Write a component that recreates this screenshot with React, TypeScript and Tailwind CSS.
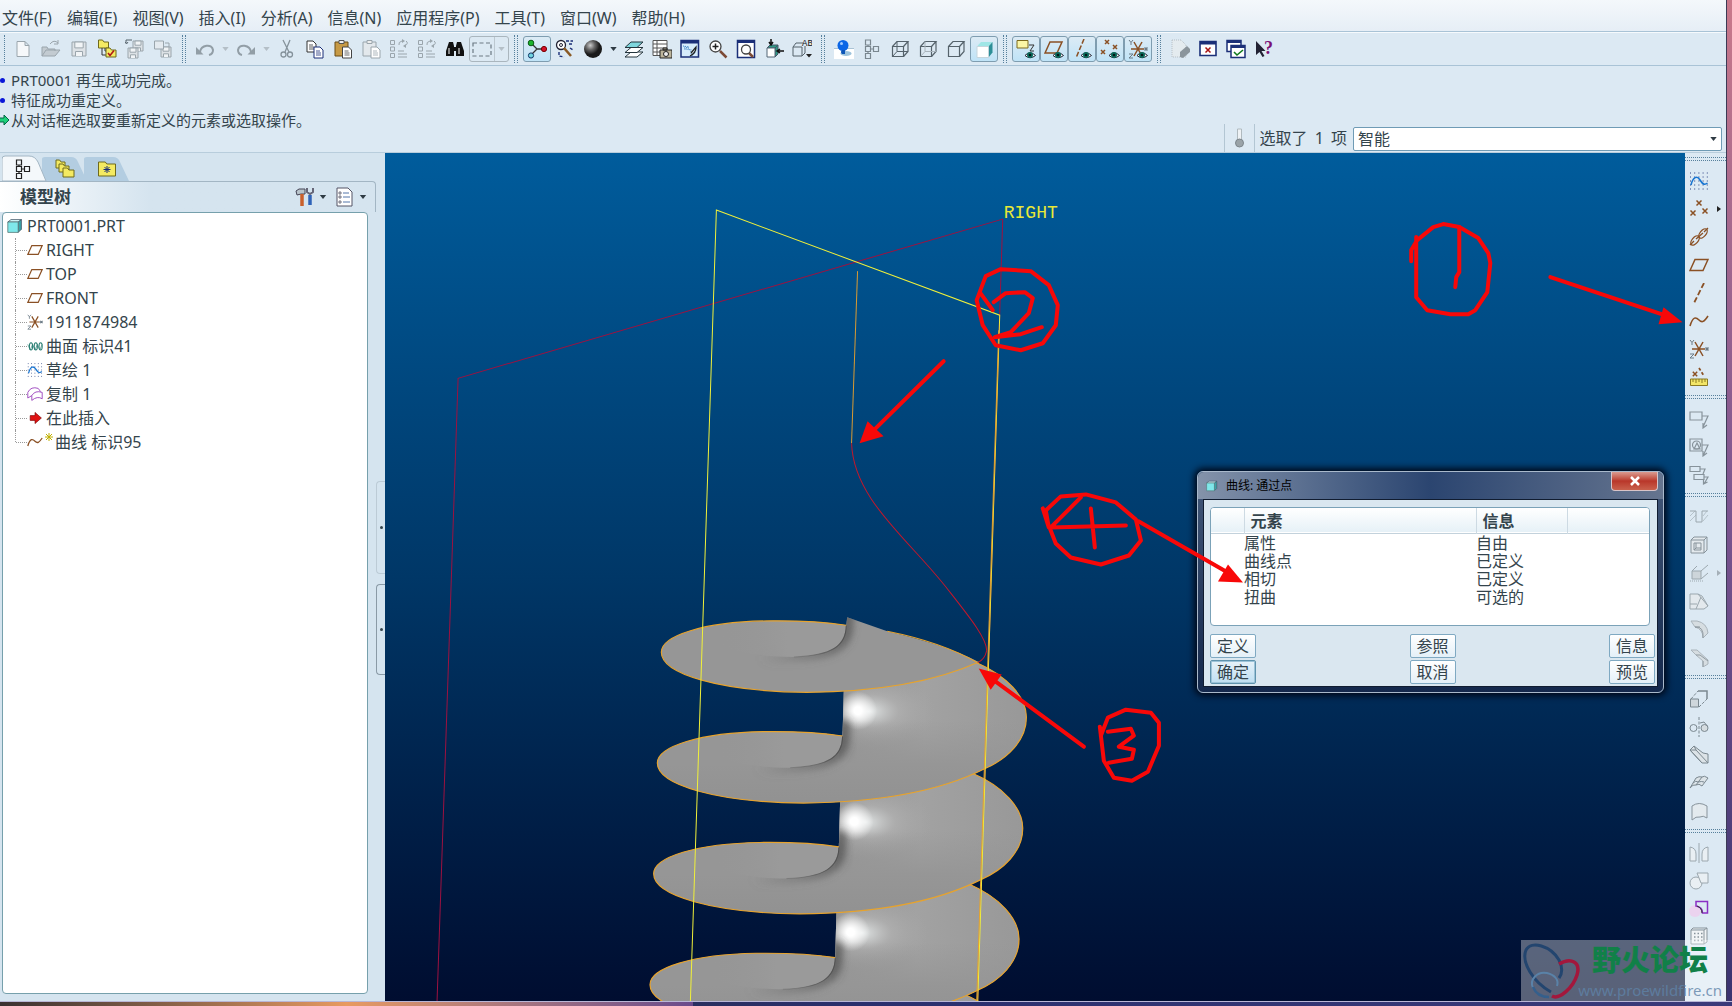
import { useState, type ReactNode } from 'react'
import clsx from 'clsx'

const G = '#9aa5ac'
const D = '#55626b'
const B = '#8a5024'
const N = '#1b2f78'

const eye = (
  <g>
    <path d="M9 16.500Q14 11 19.500 16.500Q14 21 9 16.500Z" fill="#fff" stroke="#223" strokeWidth="1" />
    <circle cx="14" cy="16" r="3" fill="#0b6b5c" />
    <circle cx="14" cy="16" r="1.300" fill="#001a1a" />
  </g>
)

const folder = (x: number, y: number, w: number, h: number) => (
  <path d={`M${x} ${y}h${w * 0.4}l1.500 2h${w * 0.6 - 1.5}v${h - 2}h-${w}Z`} fill="#f4ea62" stroke="#6f6a1c" />
)

const cross = (x: number, y: number, c = B, r = 2) => (
  <path d={`M${x - r} ${y - r}l${r * 2} ${r * 2}M${x + r} ${y - r}l-${r * 2} ${r * 2}`} stroke={c} strokeWidth="1.500" />
)

const cube = (fill: string, inner = false) => (
  <g stroke={D} strokeWidth="1.200">
    <path d="M2.500 7.500h11v10h-11Z" fill={fill} />
    <path d="M2.500 7.500L7 2.500h11L13.500 7.500M18 2.500v10l-4.500 5" />
    {inner && <path d="M7 2.500v10h11M7 12.500l-4.500 5" strokeWidth="1" />}
  </g>
)

const floppy = (x: number, y: number, s: number) => (
  <g stroke={G} fill="#dde2e6">
    <path d={`M${x} ${y}h${s}v${s}h-${s}Z`} />
    <path d={`M${x + s * 0.2} ${y}h${s * 0.6}v${s * 0.42}h-${s * 0.6}ZM${x + s * 0.25} ${y + s}v-${s * 0.32}h${s * 0.5}v${s * 0.32}`} fill="#f1f4f6" />
  </g>
)

const sheet = (x: number, y: number, c: string) => (
  <g>
    <path d={`M${x} ${y}h6l3 3v8h-9Z`} fill="#fff" stroke={c} />
    <path d={`M${x + 2} ${y + 4}h4M${x + 2} ${y + 6}h5M${x + 2} ${y + 8}h5`} stroke={c} strokeWidth="0.800" />
  </g>
)

const listArrows = (
  <g stroke={G}>
    <path d="M1.500 1.500h4v4h-4ZM1.500 8h4v4h-4ZM1.500 14.500h4v4h-4Z" />
    <path d="M9 12h6M9 15h9M9 18h9M10 6Q9 3 13 2M17 2Q20 4 16 7" />
    <path d="M13 0v4l3-2ZM17 5v4l-3-2Z" fill={G} stroke="none" />
  </g>
)

const csys = (
  <g>
    <path d="M3 10h13M6 3l8 14M14 3L6 17" stroke={B} strokeWidth="1.500" />
    <path d="M1 1l2 2.500L5 1M3 3.500V6M1 15h4l-4 4h4" stroke="#6b7a85" />
    {cross(18, 10, '#6b7a85', 1.5)}
  </g>
)

const sketch = (
  <g>
    <path d="M1 2h18M1 6h18M1 14h18M1 18h18M1 10h18" stroke="#2a3f80" strokeDasharray="1 3.200" />
    <path d="M2 14C4 6 8 4 11 9S16 14 18.500 12" stroke="#1976d2" strokeWidth="1.600" />
  </g>
)

const plane = <path d="M6 4.500h13l-5 11h-13Z" stroke={B} strokeWidth="1.500" />

const wire = <path d="M1 15C4 5 7 6 10 9S15 11 19 5" stroke={B} strokeWidth="1.600" />

const frames = (c: string) => (
  <path d="M7.500 1h5v5h-5ZM7.500 7.500h5v5h-5ZM7.500 14.500h5v5h-5ZM15.500 7.500h5v5h-5ZM10 6v1.500M10 12.500v2M12.500 10h3" stroke={c} strokeWidth="1.200" transform="translate(-4 0)" />
)

const icons: Record<string, ReactNode> = {
  new: <path d="M4 2.500h8l4 4v11H4ZM12 2.500v4h4" fill="#f6f8fa" stroke={G} />,
  open: <g stroke={G}><path d="M1 17V8h5l1 2h7v2M1 17l4-6h14l-5 6Z" fill="#c3cbd1" /><path d="M9 5q4-5 8-1M17 1v4h-4" /></g>,
  save: floppy(3, 3, 14),
  folders: <g>{folder(1.5, 1, 10, 8)}<path d="M5 9v7h4M8 9v3h3" stroke="#333" />{folder(9, 9, 10, 9)}<path d="M11 14l2 2.500 4-5" stroke="#b01818" strokeWidth="1.600" /></g>,
  saveAs: <g>{floppy(8, 2, 10)}{floppy(3, 9, 10)}<path d="M7 1H1v3M0 3l1.500 2L3 3" stroke={D} /></g>,
  saveCopy: <g>{floppy(8, 8, 10)}<path d="M1.500 2h9v8h-9Z" fill="#e4eaef" stroke={G} /><path d="M12 4h4v4" stroke={G} /></g>,
  undo: <g><path d="M5 13C6 6 17 4 18 11q0 4-4 5" stroke="#929ea6" strokeWidth="2" /><path d="M1 8v7.500h7.500Z" fill="#929ea6" /></g>,
  redo: <g><path d="M15 13C14 6 3 4 2 11q0 4 4 5" stroke="#929ea6" strokeWidth="2" /><path d="M19 8v7.500h-7.500Z" fill="#929ea6" /></g>,
  cut: <g stroke="#85929b" strokeWidth="1.300"><path d="M6 1l6 12M13 1L8 13" /><circle cx="6.500" cy="15.500" r="2.500" /><circle cx="13" cy="15.500" r="2.500" /></g>,
  copy: <g>{sheet(2, 2, '#333')}{sheet(9, 8, N)}</g>,
  paste: <g><path d="M2 3h13v14H2Z" fill="#c79a45" stroke="#6b4d16" /><path d="M6 1.500h5v3H6Z" fill="#eee" stroke="#555" />{sheet(9.5, 8, '#444')}</g>,
  pasteSpecial: <g><path d="M2 3h13v14H2Z" fill="#e3e8ec" stroke={G} /><path d="M6 1.500h5v3H6Z" fill="#eee" stroke={G} />{sheet(10, 8, G)}</g>,
  regen: listArrows,
  regenMgr: listArrows,
  find: <g fill="#111"><path d="M4 3h4l1 4v10H1v-5ZM16 3h-4l-1 4v10h8v-5Z" /><path d="M8 8h4v4H8Z" /><path d="M4 9v6M14 9v6" stroke="#fff" /></g>,
  box: <path d="M1 4h18v13H1Z" stroke="#6c7a84" strokeDasharray="4 2.500" strokeWidth="1.200" />,
  spin: <g><path d="M4 4l6 6M10 10h7M10 10l-6 6" stroke="#333" strokeWidth="1.300" /><circle cx="4" cy="4" r="2.800" fill="#1bb52c" stroke="#0a5a16" /><circle cx="17" cy="10" r="2.600" fill="#d3122b" stroke="#700" /><circle cx="4" cy="16.500" r="2.600" fill="#6fd4de" stroke="#136" /></g>,
  orient: <g><circle cx="6" cy="6" r="4.500" fill="#fff" stroke="#223" strokeWidth="1.300" /><circle cx="6" cy="6" r="1.500" stroke="#223" /><path d="M9 9l7 8" stroke="#8a5a24" strokeWidth="2.500" /><path d="M11 2h7M14 5h4M4 13v4l5 1M15 9l3 2" stroke={N} strokeDasharray="3 1.500" strokeWidth="1.400" /></g>,
  sphere: <circle cx="10" cy="10" r="9" fill="url(#ball)" />,
  layers: <g stroke="#24343c"><path d="M1 18l6-5h12l-6 5Z" fill="#fff" /><path d="M1 13.500l6-5h12l-6 5Z" fill="#fff" /><path d="M1 8.500L7 3h12l-6 5.500Z" fill="#7fd6dc" /></g>,
  camera: <g><path d="M1 1.500h14v15H1ZM1 5h14M1 9h14M1 13h14M5 1.500v15" fill="#fff" stroke="#555" /><path d="M8 11h12v8H8ZM11 9h4v2h-4Z" fill="#bcb49b" stroke="#222" /><circle cx="14" cy="15" r="2.500" fill="#eee" stroke="#222" /></g>,
  repaint: <g><path d="M1 1.500h17.500v16.500H1Z" fill="#d7ecfb" stroke={N} strokeWidth="1.500" /><path d="M1 1h17.500v3.500H1Z" fill={N} /><path d="M3 7l6 1-5 2 8 1M4 8q8 1 7 9q5-2 5-9" stroke="#3d83c5" strokeDasharray="1 1" /><path d="M10 17q6-3 6-9l-5 6" stroke="#222" strokeWidth="1.300" /></g>,
  zoomIn: <g><path d="M12 12l6.500 6.500" stroke="#7c4a36" strokeWidth="2.500" /><circle cx="7.500" cy="7.500" r="5.500" fill="#fff" stroke="#444" strokeWidth="1.300" /><path d="M4.500 7.500h6M7.500 4.500v6" stroke="#222" strokeWidth="1.500" /></g>,
  refit: <g><path d="M1.500 1.500h17v17h-17Z" fill="#fff" stroke={N} strokeWidth="1.500" /><path d="M1 1h18v3H1Z" fill={N} /><path d="M12 13l5 5" stroke="#7c4a36" strokeWidth="2.500" /><circle cx="10" cy="10.500" r="4.500" fill="#fff" stroke="#444" strokeWidth="1.300" /></g>,
  reorient: <g><path d="M3 9l3-3h8l-3 3ZM11 9l3-3v9l-3 3Z" fill="#2e9c86" stroke="#456" /><path d="M3 9h8v9H3Z" fill="#fff" stroke="#567" /><path d="M7 0v5M5 3l2 3 2-3M20 12h-6M16 10l-3 2 3 2" stroke="#111" strokeWidth="1.500" /></g>,
  views: <g><path d="M1 8h9v9H1ZM1 8l3-4h7M10 17l3-3V7" fill="none" stroke={D} /><text x="10" y="7" fontSize="9" fontFamily="Liberation Mono" fill="#111">AB</text><path d="M14 15h6l-3 3.500Z" fill="#222" /></g>,
  pushpin: <g><path d="M0 10h20v10H0Z" fill="#fff" /><path d="M0 9.500h20" stroke="#aac3d5" /><ellipse cx="12" cy="14.500" rx="5.500" ry="2.500" fill="#9cc3dd" /><circle cx="9" cy="6.500" r="5.500" fill="#0b66e6" /><path d="M8 11q-2 2 0 4h3v-4Z" fill="#0d55b8" /><circle cx="7.500" cy="4.500" r="1.500" fill="#9fcaff" /></g>,
  tree: frames('#7a878f'),
  wireframe: cube('none', true),
  hidden: <g>{cube('none')}<path d="M7 2.500v10h11M7 12.500l-4.500 5" stroke="#a9b4bc" /></g>,
  nohidden: cube('none'),
  shaded: <g><path d="M3 7.500L7 3h11.500l-4 4.500Z" fill="#9fe6e6" /><path d="M14.500 7.500l4-4.500v10.500l-4 5Z" fill="#2d8f97" /><path d="M3 7.500h11.500v11H3Z" fill="#fff" stroke="#c6d6dd" /></g>,
  annot: <g><path d="M1 1.500h11v7.500H1Z" fill="#fbf6a6" stroke="#7c6a1e" /><path d="M13 6h5l-4 6h4" stroke="#333" />{eye}</g>,
  planeEye: <g><path d="M6 3h12l-5 11H1Z" stroke={B} strokeWidth="1.500" />{eye}</g>,
  axisEye: <g><path d="M12 0L4 19" stroke={B} strokeWidth="1.500" strokeDasharray="5 2" />{eye}</g>,
  pointEye: <g>{cross(7, 3)}{cross(15, 8)}{cross(3, 13)}{eye}</g>,
  csysEye: <g>{csys}{eye}</g>,
  annotOff: <g><path d="M2 1h9l5 5v12H2Z" stroke="#b5bec4" strokeDasharray="1 1" fill="#e4ebef" /><path d="M10 13l7-6 3 3v3l-7 6-3-1Z" fill="#8b959c" /></g>,
  closeWin: <g><path d="M2 2.500h16v14H2Z" fill="#fff" stroke={N} strokeWidth="1.600" /><path d="M2 2h16v3.500H2Z" fill={N} />{cross(10, 11, '#a81212', 2.5)}</g>,
  activate: <g><path d="M1 1.500h14v11H1Z" fill="#fff" stroke={N} strokeWidth="1.500" /><path d="M1 1h14v3H1Z" fill={N} /><path d="M5 6.500h14v12H5Z" fill="#fff" stroke={N} strokeWidth="1.500" /><path d="M5 6h14v3H5Z" fill={N} /><path d="M8 13l3 3 6-5" stroke="#117a1c" strokeWidth="1.600" /></g>,
  help: <g><path d="M2 2v14l3.500-3 3 5 2-1-3-5h4Z" fill="#223" /><text x="10" y="15" fontSize="18" fontWeight="700" fontFamily="Liberation Serif" fill="#7a1177">?</text></g>,
  sketch,
  plane,
  wire,
  csys,
  points: <g>{cross(10, 4, B, 2.5)}{cross(4, 14, B, 2.5)}{cross(16, 12, B, 2.5)}</g>,
  chain: <g stroke={B} strokeWidth="1.300"><ellipse cx="6" cy="13.500" rx="5.500" ry="3" transform="rotate(-50 6 13.500)" /><ellipse cx="14" cy="6.500" rx="5.500" ry="3" transform="rotate(-50 14 6.500)" /><path d="M7 12l7-6M1 18l4-4M15 5l4-4" /></g>,
  axis: <path d="M15 0L5 20" stroke={B} strokeWidth="1.800" strokeDasharray="5.500 2.500" />,
  ruler: <g>{cross(6, 7, B, 2.2)}<path d="M10 1l5 8" stroke={B} strokeWidth="1.700" strokeDasharray="3 2" /><path d="M1.500 12h17v6.500h-17Z" fill="#f3e667" stroke="#8a7b23" /><path d="M4 12v3M7 12v4M10 12v3M13 12v4M16 12v3" stroke="#8a7b23" /></g>,
  note: <path d="M1 3h12v8H1ZM13 7h6l-5 11M14 14v5l4-3" stroke="#87939b" strokeWidth="1.200" />,
  noteGeo: <g stroke="#87939b" strokeWidth="1.200"><path d="M1 2h12v12H1ZM13 8h6l-5 11M14 14v5l4-3" /><circle cx="7.500" cy="8" r="4" /><path d="M5 12l3-6 3 6Z" /></g>,
  noteMulti: <path d="M1 1.500h10v5H1ZM11 4h5l-2 5M5 9.500h10v5H5ZM15 12h4l-4 7M14.500 15v4l4-2" stroke="#87939b" strokeWidth="1.200" />,
  hole: <g stroke="#9ba7ae"><path d="M1 4h6v11h6V4h6" /><path d="M1 9l5-5M1 14l6-6M14 14l5-6M14 9l4-5" strokeWidth="0.600" /></g>,
  shell: <path d="M2 5h13v13H2ZM2 5l3-3h13l-3 3M18 2v13l-3 3M5 8h7v7H5ZM7 8v5h5M5 15l2-2" fill="#e3e9ed" stroke="#87939b" />,
  rib: <g stroke="#9ba7ae"><path d="M3 8h9v8H3ZM3 8l5-5M12 8l7-6M12 16l7-6" fill="#cdd5da" /><path d="M1 18h14" strokeDasharray="1 1" /></g>,
  draft: <path d="M1 3h8l10 12-4 3H1ZM9 3l4 2 6 10M12 6L7 18M1 13h7" fill="#e3e9ed" stroke="#9ba7ae" />,
  round: <g stroke="#aab4bb"><path d="M2 2h6q10 2 11 12l-5 5q0-9-8-11Z" fill="#d6dde1" /><path d="M6 8q9-1 8 11M6 8h5" stroke="#8f9aa1" /></g>,
  chamfer: <g stroke="#aab4bb"><path d="M2 3h6l11 10v4l-5 3V14L7 8Z" fill="#d6dde1" /><path d="M7 8h4l8 6M14 14v6" stroke="#8f9aa1" /></g>,
  extrude: <g stroke="#7b8890"><path d="M1.500 10h8v8h-8Z" fill="#cfd7dc" /><path d="M2 10l7-8M10 18l8-8" strokeDasharray="3 1.500" /><path d="M9 2h9v8" strokeWidth="1.500" /></g>,
  revolve: <g stroke="#7b8890"><path d="M10 0v20" strokeDasharray="3 1.500" /><circle cx="4.500" cy="11" r="3.500" /><circle cx="15.500" cy="11" r="3.500" fill="#d5dce0" /><path d="M11 6l4-1 4 5" /></g>,
  sweep: <g stroke="#7b8890"><path d="M1 5l4-4 9 7 5 1v9h-6Z" fill="#dce3e7" /><path d="M1 5l6 0 12 13M5 1l2 4M1 5l12 13" /></g>,
  blend: <path d="M1 15q3-4 6-3 3-2 6 1l6-8q-4-3-6-1-3-1-6 1ZM7 12l6-8M4 10q3-3 5-1 4-1 6 0" fill="#dce3e7" stroke="#7b8890" />,
  style: <path d="M3 5q7-5 15 0v12q-4-3-7-1-4-1-8 3Z" fill="#e3eaee" stroke="#87939b" />,
  mirror: <g stroke="#9ba7ae"><path d="M10 0v20" /><path d="M1 4q6 1 6 7v7H1ZM19 4q-6 1-6 7v7h6Z" fill="#e9eff3" /></g>,
  merge: <g stroke="#9ba7ae" fill="#e9eff3"><circle cx="7" cy="12" r="6" /><path d="M8 2h11v10h-7Z" /></g>,
  trim: <g><circle cx="6" cy="12" r="6" fill="#f1c9ec" opacity="0.700" /><path d="M7 2.500h11.500v11.500h-5q0-6-6.500-7Z" stroke="#8a2fc4" strokeWidth="1.500" /><path d="M8 7q5 2 5 7" stroke="#333" /></g>,
  pattern: <g><path d="M2 3h13v14H2ZM15 3l3-2v14l-3 2M2 3l2-2h14" fill="#f1f4f6" stroke="#87939b" /><path d="M5 6.500h9M5 10h9M5 13.500h9" stroke="#87939b" strokeDasharray="1.500 2" strokeWidth="1.500" /></g>,
  part: <g><path d="M1 5l4-3h13l-4 3Z" fill="#d8ffff" stroke="#456" /><path d="M14 5l4-3v12l-4 4Z" fill="#3aa4a8" stroke="#456" /><path d="M1 5h13v13H1Z" fill="#7fe8ea" stroke="#577" /></g>,
  surf: <g stroke="#2b7f74" strokeWidth="1.300"><ellipse cx="5" cy="10.500" rx="2" ry="4.500" /><ellipse cx="11" cy="10.500" rx="2" ry="4.500" /><ellipse cx="17" cy="10.500" rx="2" ry="4.500" /><path d="M1 8l3 7 3-7 3 7 3-7 3 7 3-7" strokeWidth="0.800" /></g>,
  copySurf: <path d="M1 15V8q4-8 13-5l3 4M6 18v-6q4-7 13-4v8q-6-4-13 2ZM1 15l5-3" stroke="#a04cc0" strokeWidth="1.200" />,
  insert: <path d="M4 7h6V3l8 7-8 7v-4H4Z" fill="#e01212" stroke="#700" strokeWidth="0.800" />,
  folderStack: <g>{folder(1, 1, 9, 8)}{folder(4, 5, 10, 8)}{folder(8, 9, 11, 9)}</g>,
  folderStar: <g>{folder(1.5, 3, 17, 14)}<path d="M10 7v7M6.500 10.500h7M7.500 8l5 5M12.500 8l-5 5" stroke={N} /></g>,
  tools: <g><path d="M1 4l3-2h6v5H6L2 8Z" fill="#b9c4cb" stroke="#445" /><path d="M7 7v12" stroke="#c9602c" strokeWidth="3.500" /><path d="M15 8v10" stroke="#2f63b8" strokeWidth="3.500" /><path d="M12 1v4l3 2 3-2V1" stroke="#667" strokeWidth="2" /></g>,
  settings: <g><path d="M2 1h11l4 4v14H2Z" fill="#fff" stroke="#556" /><path d="M8 6h6M8 10h7M8 15h7" stroke="#5577aa" /><path d="M4 5h2v2H4ZM4 9h2v2H4ZM4 14h2v2H4Z" stroke="#556" strokeWidth="0.800" /></g>,
}

function Icon({ name, small }: { name: string; small?: boolean }) {
  return (
    <svg viewBox="0 0 20 20" fill="none" className={small ? 'h-4 w-4 shrink-0' : 'h-5 w-5 shrink-0'} aria-hidden="true">
      {icons[name]}
    </svg>
  )
}

function ToolButton({ name, pressed }: { name: string; pressed?: boolean }) {
  return (
    <button
      type="button"
      aria-label={name}
      className={clsx(
        'flex h-[26px] w-7 shrink-0 items-center justify-center rounded-[3px]',
        pressed && 'border border-[#7f9db0] bg-gradient-to-b from-[#dcebf5] to-[#bfe3f7]'
      )}
    >
      <Icon name={name} />
    </button>
  )
}

function Caret({ dim, wide }: { dim?: boolean; wide?: boolean }) {
  return (
    <svg viewBox="0 0 8 5" className={clsx('h-1 shrink-0', wide ? 'mx-1 w-2' : 'mx-[2px] w-[9px]')} aria-hidden="true">
      <path d="M0 0h8L4 5Z" fill={dim ? '#b4bfc7' : '#2f3b44'} />
    </svg>
  )
}

function Grip() {
  return <span className="mx-[5px] h-7 w-1 shrink-0 border-x border-dotted border-[#56809c]" />
}

const menus = ['文件(F)', '编辑(E)', '视图(V)', '插入(I)', '分析(A)', '信息(N)', '应用程序(P)', '工具(T)', '窗口(W)', '帮助(H)']

const sideGroups = [
  ['sketch', 'points', 'chain', 'plane', 'axis', 'wire', 'csys', 'ruler'],
  ['note', 'noteGeo', 'noteMulti'],
  ['hole', 'shell', 'rib', 'draft', 'round', 'chamfer'],
  ['extrude', 'revolve', 'sweep', 'blend', 'style'],
  ['mirror', 'merge', 'trim', 'pattern'],
]

const treeItems = [
  { icon: 'plane', label: 'RIGHT' },
  { icon: 'plane', label: 'TOP' },
  { icon: 'plane', label: 'FRONT' },
  { icon: 'csys', label: '1911874984' },
  { icon: 'surf', label: '曲面 标识41' },
  { icon: 'sketch', label: '草绘 1' },
  { icon: 'copySurf', label: '复制 1' },
  { icon: 'insert', label: '在此插入' },
  { icon: 'wire', label: '曲线 标识95', fresh: true },
]

const elements = [
  ['属性', '自由'],
  ['曲线点', '已定义'],
  ['相切', '已定义'],
  ['扭曲', '可选的'],
]

function Toolbar() {
  return (
    <div className="flex h-[35px] shrink-0 items-center overflow-hidden border-y border-[#a9c3d6] bg-[#dce9f3] shadow-[inset_0_1px_0_#f6fafd]">
      <span className="mr-1 h-7 w-[5px] shrink-0 border-r border-dotted border-[#56809c]" />
      {['new', 'open', 'save', 'folders', 'saveAs', 'saveCopy'].map(n => <ToolButton key={n} name={n} />)}
      <Grip />
      <ToolButton name="undo" />
      <Caret dim />
      <ToolButton name="redo" />
      <Caret dim />
      {['cut', 'copy', 'paste', 'pasteSpecial', 'regen', 'regenMgr', 'find'].map(n => <ToolButton key={n} name={n} />)}
      <div className="flex h-[26px] shrink-0 items-center rounded-[3px] border border-[#aab6be]">
        <button type="button" aria-label="box" className="flex w-6 justify-center"><Icon name="box" /></button>
        <span className="h-6 border-l border-[#bcc8d0]" />
        <Caret dim />
      </div>
      <Grip />
      <ToolButton name="spin" pressed />
      <ToolButton name="orient" />
      <ToolButton name="sphere" />
      <Caret />
      {['layers', 'camera', 'repaint', 'zoomIn', 'refit', 'reorient', 'views'].map(n => <ToolButton key={n} name={n} />)}
      <Grip />
      {['pushpin', 'tree', 'wireframe', 'hidden', 'nohidden'].map(n => <ToolButton key={n} name={n} />)}
      <ToolButton name="shaded" pressed />
      <Grip />
      {['annot', 'planeEye', 'axisEye', 'pointEye', 'csysEye'].map(n => <ToolButton key={n} name={n} pressed />)}
      <Grip />
      {['annotOff', 'closeWin', 'activate', 'help'].map(n => <ToolButton key={n} name={n} />)}
    </div>
  )
}

function Messages() {
  const [filter, setFilter] = useState('智能')
  return (
    <div className="flex h-[87px] shrink-0 justify-between border-b border-[#b8cddc] bg-[#dce9f3]">
      <ul className="pt-1 text-[15px] leading-5">
        <li className="flex items-center gap-[6px]"><span className="h-[5px] w-[5px] rounded-full bg-[#0a18d8]" />PRT0001 再生成功完成。</li>
        <li className="flex items-center gap-[6px]"><span className="h-[5px] w-[5px] rounded-full bg-[#0a18d8]" />特征成功重定义。</li>
        <li className="flex items-center gap-[2px]">
          <svg viewBox="0 0 9 12" className="h-3 w-[9px]" aria-hidden="true"><path d="M0 4h4V1l5 5-5 5V8H0" fill="#1fd07a" stroke="#064" /></svg>
          从对话框选取要重新定义的元素或选取操作。
        </li>
      </ul>
      <div className="flex items-end">
        <div className="flex h-7 items-center border-l border-[#b3c6d3] px-2">
          <svg viewBox="0 0 10 20" className="h-5 w-[13px]" aria-hidden="true">
            <path d="M3 1h4v11H3Z" fill="#eef2f5" stroke="#b0babf" />
            <circle cx="5" cy="15" r="4" fill="#9aa3a8" stroke="#7c868c" />
          </svg>
        </div>
        <label htmlFor="filter" className="flex h-7 items-center border-l border-[#b3c6d3] pr-[6px] pl-[5px] text-base whitespace-pre">选取了 <span className="px-[3px]">1</span> 项</label>
        <div className="relative mr-1 mb-[1px]">
          <select id="filter" value={filter} onChange={e => setFilter(e.target.value)} className="block h-6 w-[369px] appearance-none rounded-[2px] border border-[#6f9bb5] bg-white pl-1 text-base leading-5">
            <option>智能</option>
            <option>几何</option>
          </select>
          <span className="pointer-events-none absolute top-[10px] right-[2px] flex"><Caret /></span>
        </div>
      </div>
    </div>
  )
}

function ModelTree() {
  return (
    <aside className="flex w-[385px] shrink-0 bg-[#d5e4ef]">
      <div className="flex min-w-0 flex-1 flex-col pb-[7px]">
        <div className="relative flex h-7 shrink-0 items-end pl-[2px]">
          <svg viewBox="0 0 130 26" className="absolute bottom-0 left-[2px] h-[26px] w-[130px]" aria-hidden="true">
            <path d="M82 26V4q0-2 3-2h26q5 0 7 5l9 19Z" fill="#b3cde1" />
            <path d="M40 26V4q0-2 3-2h26q5 0 7 5l9 19Z" fill="#b3cde1" />
            <path d="M0 26V4q0-3 3-3h24q6 0 9 6l8 19Z" fill="#f4f8fb" stroke="#a3b6c4" />
          </svg>
          <button type="button" aria-label="模型树" className="relative flex h-6 w-[42px] items-center justify-center">
            <svg viewBox="0 0 20 20" fill="none" className="h-5 w-5" aria-hidden="true">{frames('#222')}</svg>
          </button>
          <button type="button" aria-label="文件夹" className="relative flex h-6 w-[42px] items-center justify-center"><Icon name="folderStack" /></button>
          <button type="button" aria-label="收藏夹" className="relative flex h-6 w-[42px] items-center justify-center"><Icon name="folderStar" /></button>
        </div>
        <div className="flex h-[31px] shrink-0 items-center rounded-tr border-t border-r border-[#a3b6c4] bg-gradient-to-r from-white to-[#d5e4ef] to-40% pr-1 pl-5">
          <h2 className="flex-1 text-[17px] leading-6 font-bold">模型树</h2>
          <button type="button" aria-label="设置" className="flex items-center"><Icon name="tools" /><Caret wide /></button>
          <button type="button" aria-label="显示" className="ml-1 flex items-center"><Icon name="settings" /><Caret wide /></button>
        </div>
        <div className="mr-2 ml-[2px] flex-1 rounded border border-[#76a0ac] bg-white pt-[1px] pl-1">
          <div className="flex h-6 items-center gap-1"><Icon name="part" small />PRT0001.PRT</div>
          <ul className="ml-2">
            {treeItems.map((t, i) => (
              <li key={t.label} className="flex h-6 items-center">
                <span className={clsx('w-0 self-start border-l border-dotted border-[#9a9a9a]', i === treeItems.length - 1 ? 'h-3' : 'h-6')} />
                <span className="w-[11px] border-t border-dotted border-[#9a9a9a]" />
                <Icon name={t.icon} small />
                {t.fresh && (
                  <svg viewBox="0 0 8 8" className="mt-[-10px] ml-[2px] h-2 w-2" aria-hidden="true"><path d="M4 0v8M0 4h8M1 1l6 6M7 1L1 7" stroke="#c0b000" /></svg>
                )}
                <span className={t.fresh ? 'ml-[2px]' : 'ml-[3px]'}>{t.label}</span>
              </li>
            ))}
          </ul>
        </div>
      </div>
      <div className="flex w-[9px] flex-col gap-[10px] pt-[328px]">
        <button type="button" aria-label="collapse" className="flex h-[93px] items-center justify-center rounded-l border border-r-0 border-[#bccbd6]"><span className="h-[3px] w-[3px] rounded-full bg-[#34444c]" /></button>
        <button type="button" aria-label="resize" className="flex h-[91px] items-center justify-center rounded-l border border-r-0 border-[#8a9aa6]"><span className="h-[3px] w-[3px] rounded-full bg-[#34444c]" /></button>
      </div>
    </aside>
  )
}

// One turn of the screw, drawn at three units to the pixel.
function Turn({ n, top }: { n: number; top?: boolean }) {
  const outer = top
    ? 'M677 104C600 92 520 90 440 91C250 94 123 135 123 185C123 250 300 303 560 305C760 303 940 275 1074 214'
    : 'M1063 214C1160 255 1217 320 1217 380C1217 450 1160 505 1090 535C960 600 780 635 549 637C289 635 111 582 111 517C111 467 239 426 429 423C509 422 589 424 666 436'
  const body = top
    ? `${outer}C1000 175 900 145 800 122L680 80Z`
    : `${outer}L670 290Z`
  const id = `turn${n}`
  return (
    <g transform={`translate(${(top ? 0 : n) * -11} ${(top ? 0 : n) * 332})`}>
      <clipPath id={id}><path d={body} /></clipPath>
      <path d={body} fill="#969696" />
      <g clipPath={`url(#${id})`}>
        {!top && <rect x="655" y="180" width="570" height="460" fill="url(#drum)" />}
        {!top && <ellipse cx="745" cy="362" rx="200" ry="115" fill="url(#glow)" />}
        {!top && <circle cx="712" cy="360" r="58" fill="url(#spot)" />}
        {!top && <rect x="100" y="390" width="1130" height="260" fill="url(#flare)" />}
        <g transform={top ? undefined : 'translate(-11 332)'}>
          <path d="M684 60L682 110C680 180 620 200 400 204" stroke="url(#shade)" strokeWidth="22" fill="none" filter="url(#soft)" />
          <path d="M677 90C678 165 635 195 520 199C440 199 380 190 300 170L200 80Z" fill="url(#plate)" />
          <path d="M677 104C678 165 635 195 520 199" stroke="url(#shade)" strokeWidth="3" />
        </g>
      </g>
      <path d={outer} fill="none" stroke="#e6a32e" strokeWidth="3.500" />
      {top && <path d="M800 122C900 142 1000 175 1074 218" fill="none" stroke="#e6a32e" strokeWidth="3.500" />}
    </g>
  )
}

function Scene() {
  return (
    <svg viewBox="385 153 1300 847" preserveAspectRatio="xMinYMin slice" fill="none" className="absolute inset-0 h-full w-full" aria-hidden="true">
      <defs>
        <radialGradient id="spot"><stop offset="0.200" stopColor="#fff" /><stop offset="1" stopColor="#fff" stopOpacity="0" /></radialGradient>
        <radialGradient id="glow"><stop offset="0" stopColor="#e4e8e8" /><stop offset="0.450" stopColor="#bbb" stopOpacity="0.500" /><stop offset="1" stopColor="#aaa" stopOpacity="0" /></radialGradient>
        <linearGradient id="drum"><stop offset="0" stopColor="#757575" /><stop offset="0.100" stopColor="#989898" /><stop offset="0.450" stopColor="#a2a2a2" /><stop offset="1" stopColor="#989898" /></linearGradient>
        <linearGradient id="flare" x1="0" y1="0" x2="0" y2="1"><stop offset="0" stopColor="#969696" stopOpacity="0" /><stop offset="0.500" stopColor="#969696" /><stop offset="1" stopColor="#919191" /></linearGradient>
        <linearGradient id="plate" gradientUnits="userSpaceOnUse" x1="300" y1="0" x2="500" y2="0"><stop offset="0" stopColor="#969696" stopOpacity="0" /><stop offset="1" stopColor="#9a9a9a" /></linearGradient>
        <linearGradient id="shade" gradientUnits="userSpaceOnUse" x1="420" y1="0" x2="680" y2="0"><stop offset="0" stopColor="#6a6a6a" stopOpacity="0" /><stop offset="0.500" stopColor="#666" stopOpacity="0.600" /><stop offset="1" stopColor="#505050" /></linearGradient>
        <radialGradient id="ball" cx="0.350" cy="0.300"><stop offset="0" stopColor="#ccc" /><stop offset="0.500" stopColor="#666" /><stop offset="1" stopColor="#1a1a1a" /></radialGradient>
        <filter id="soft" x="-50%" y="-50%" width="200%" height="200%"><feGaussianBlur stdDeviation="13" /></filter>
      </defs>
      <path d="M437 1000L458 378L1002 219L977 1000" stroke="#9c1240" />
      <g transform="translate(620 590) scale(0.33333)">
        <Turn n={3} />
        <Turn n={2} />
        <Turn n={1} />
        <Turn n={0} />
        <Turn n={4} top />
      </g>
      <path d="M690 1001L716 210L999 315L977 1001" stroke="#f0f03a" />
      <path d="M998 330L976 1001" stroke="#e6a32e" />
      <path d="M857 271L851 443" stroke="#d79a33" />
      <path d="M851 443C853 500 910 540 948 590C970 618 986 638 986 650Q984 659 977 662" stroke="#c3172b" />
      <text x="1003" y="218" fontSize="18" fontFamily="Liberation Mono" fill="#e8e837">RIGHT</text>
    </svg>
  )
}

function Markup() {
  return (
    <svg viewBox="385 153 1300 847" preserveAspectRatio="xMinYMin slice" fill="none" stroke="#f80808" strokeWidth="4" strokeLinejoin="round" strokeLinecap="round" className="pointer-events-none absolute inset-0 h-full w-full" aria-hidden="true">
      <path d="M1415 237V297L1426 310L1449 314H1467L1474 310L1486 292L1489 263L1487 253L1477 238L1458 227L1442 224L1432 227L1416 240L1410 250V261" />
      <path d="M1458 227V272L1455 277L1454 287" />
      <path d="M1549 277L1660 314" />
      <path d="M979 292L976 300L982 325L995 345L1020 350L1042 343L1055 325L1057 305L1048 285L1030 271L1000 269L985 276L979 292L992 310" />
      <path d="M993 302L1005 293L1024 292L1032 298L1028 313L1010 332L994 337L1020 334L1041 327" />
      <path d="M943 361L870 433" />
      <path d="M1099 726L1103 760L1113 777L1131 780L1147 771L1158 745V722L1150 712L1125 709L1107 717L1100 735" />
      <path d="M1107 731L1130 728L1133 735L1118 746L1133 749L1131 758L1108 762" />
      <path d="M1083 746L995 681" />
      <path d="M1042 508L1048 527L1045 510L1060 496L1085 494L1115 502L1135 519L1140 540L1128 555L1100 564L1070 557L1055 543L1048 525" />
      <path d="M1080 497L1050 527L1125 525M1090 508L1094 547" />
      <path d="M1138 521L1225 571" />
      <g fill="#f80808" stroke="none">
        <path d="M1662 307L1681 322L1657 324Z" />
        <path d="M859 443L867 421L883 436Z" />
        <path d="M978 668L1001 674L990 689Z" />
        <path d="M1242 582L1227 564L1217 581Z" />
      </g>
    </svg>
  )
}

function DialogButton({ children, active }: { children: ReactNode; active?: boolean }) {
  return (
    <button
      type="button"
      className={clsx(
        'h-6 w-[46px] rounded-[2px] border text-base leading-5',
        active ? 'border-[#5f93ad] bg-gradient-to-b from-[#e6f2f9] to-[#bfdff2] shadow-[inset_0_0_0_1px_#9cc3d8]' : 'border-[#7fa9c2] bg-gradient-to-b from-white to-[#e4f0f8]'
      )}
    >
      {children}
    </button>
  )
}

function CurveDialog() {
  return (
    <section className="absolute top-[318px] right-[21px] w-[467px] rounded-md border border-[#a9b9cb] bg-gradient-to-b from-[#44597a] to-[#14284c] px-[5px] pb-[5px] shadow-[0_0_6px_3px_#000a1c]">
      <header className="-mx-[5px] flex h-[27px] items-start rounded-t-md bg-gradient-to-r from-[#8493aa] via-[#2b4570] to-[#66758f] pl-2">
        <span className="flex h-full flex-1 items-center gap-2 text-xs text-black">
          <svg viewBox="0 0 20 20" fill="none" className="h-3 w-3" aria-hidden="true">{icons.part}</svg>
          曲线: 通过点
        </span>
        <button type="button" aria-label="关闭" className="mr-[5px] flex h-[19px] w-[47px] items-center justify-center rounded-b border border-t-0 border-[#d8c4c8] bg-gradient-to-b from-[#d99a90] via-[#b9362a] to-[#c9604c]">
          <svg viewBox="0 0 10 10" className="h-[10px] w-[10px]" aria-hidden="true"><path d="M1 1l8 8M9 1L1 9" stroke="#fff" strokeWidth="2.500" /></svg>
        </button>
      </header>
      <div className="border border-[#101c30] bg-[#dae7f0] pt-[7px] pr-[2px] pb-[2px] pl-[6px]">
        <div className="mr-[5px] h-[119px] overflow-hidden rounded border border-[#7ba2b8] bg-white">
          <table className="w-full table-fixed border-collapse text-left leading-[18px]">
            <thead>
              <tr className="h-[25px] border-b border-[#c3d2dc] bg-gradient-to-b from-white to-[#e6f1f7]">
                <td className="w-[33px] border-r border-[#cddae3] p-0" />
                <th className="border-r border-[#cddae3] p-0 pt-[2px] pl-[6px]">元素</th>
                <th className="w-[91px] border-r border-[#cddae3] p-0 pt-[2px] pl-[6px]">信息</th>
                <td className="w-[82px] p-0" />
              </tr>
            </thead>
            <tbody>
              {elements.map(([name, info]) => (
                <tr key={name}>
                  <td className="p-0" />
                  <td className="p-0">{name}</td>
                  <td className="p-0">{info}</td>
                  <td className="p-0" />
                </tr>
              ))}
            </tbody>
          </table>
        </div>
        <div className="mt-2 flex justify-between"><DialogButton>定义</DialogButton><DialogButton>参照</DialogButton><DialogButton>信息</DialogButton></div>
        <div className="mt-[2px] flex justify-between"><DialogButton active>确定</DialogButton><DialogButton>取消</DialogButton><DialogButton>预览</DialogButton></div>
      </div>
    </section>
  )
}

function Watermark() {
  return (
    <div className="pointer-events-none absolute right-[6px] bottom-[5px] flex h-[61px] w-[205px] justify-end overflow-hidden bg-white/35">
      <svg viewBox="0 0 205 61" fill="none" className="absolute inset-0 h-full w-full" aria-hidden="true">
        <path d="M30 52C12 42 0 22 5 10C10 0 30 6 38 20C42 28 41 34 38 38" stroke="#23456f" strokeWidth="3" />
        <path d="M12 48C8 40 16 31 26 33C34 35 38 40 36 46" stroke="#5a82a8" strokeWidth="2" />
        <path d="M12 47Q16 57 28 57" stroke="#345f8c" strokeWidth="2.500" />
        <path d="M38 24C50 17 60 22 56 35C52 48 38 60 31 56" stroke="#a3173c" strokeWidth="3.500" />
      </svg>
      <div className="relative flex flex-col items-end pr-1">
        <span className="pr-[14px] text-[29px] leading-10 font-black text-[#118048]">野火论坛</span>
        <span className="text-[15px] leading-5 text-[#5f83a8]/80">www.proewildfire.cn</span>
      </div>
    </div>
  )
}

export default function App() {
  return (
    <div className="relative flex h-screen flex-col overflow-hidden bg-[#1f2450] font-['Noto_Sans','Noto_Sans_CJK_SC',sans-serif] text-base text-[#34444c]">
      <div className="flex min-h-0 flex-1 bg-gradient-to-b from-[#c9788a] via-[#7d5590] to-[#3a3370]">
        <div className="mr-[5px] flex min-w-0 flex-1 flex-col border-r border-[#3b3a55] bg-[#dce9f3]">
          <nav className="flex h-[31px] shrink-0 items-center gap-[15px] bg-gradient-to-b from-[#f4f8fb] to-[#e6eef6] pt-[5px] pl-[2px]">
            {menus.map(m => <button key={m} type="button" className="whitespace-nowrap">{m}</button>)}
          </nav>
          <Toolbar />
          <Messages />
          <div className="flex min-h-0 flex-1">
            <ModelTree />
            <main className="relative min-w-0 flex-1 overflow-hidden bg-gradient-to-b from-[#005c9c] via-[#003767] to-[#000d30]">
              <Scene />
              <CurveDialog />
              <Markup />
            </main>
            <div className="flex w-[41px] shrink-0 flex-col bg-[#dce9f3]">
              {sideGroups.map((g, i) => (
                <div key={g[0]} className="flex flex-col">
                  <span className="mt-1 mb-[6px] h-1 border-y border-dotted border-[#56809c]" />
                  {g.map(n => (
                    <div key={n} className="flex h-7 items-center">
                      <ToolButton name={n} />
                      {(n === 'points' || n === 'rib') && (
                        <svg viewBox="0 0 4 6" className="ml-1 h-[6px] w-1" aria-hidden="true"><path d="M0 0v6l4-3Z" fill={i ? '#a5b0b8' : '#222'} /></svg>
                      )}
                    </div>
                  ))}
                </div>
              ))}
            </div>
          </div>
        </div>
      </div>
      <div className="h-[5px] shrink-0 border-t border-[#b9b6d6] bg-gradient-to-r from-[#2c2a28] via-[#2a2f6e] to-[#3b3a7a]">
        <div className="h-full w-2/5 bg-gradient-to-r from-[#3a3030] via-[#e89a60] to-[#6a4a8c]" />
      </div>
      <Watermark />
    </div>
  )
}
